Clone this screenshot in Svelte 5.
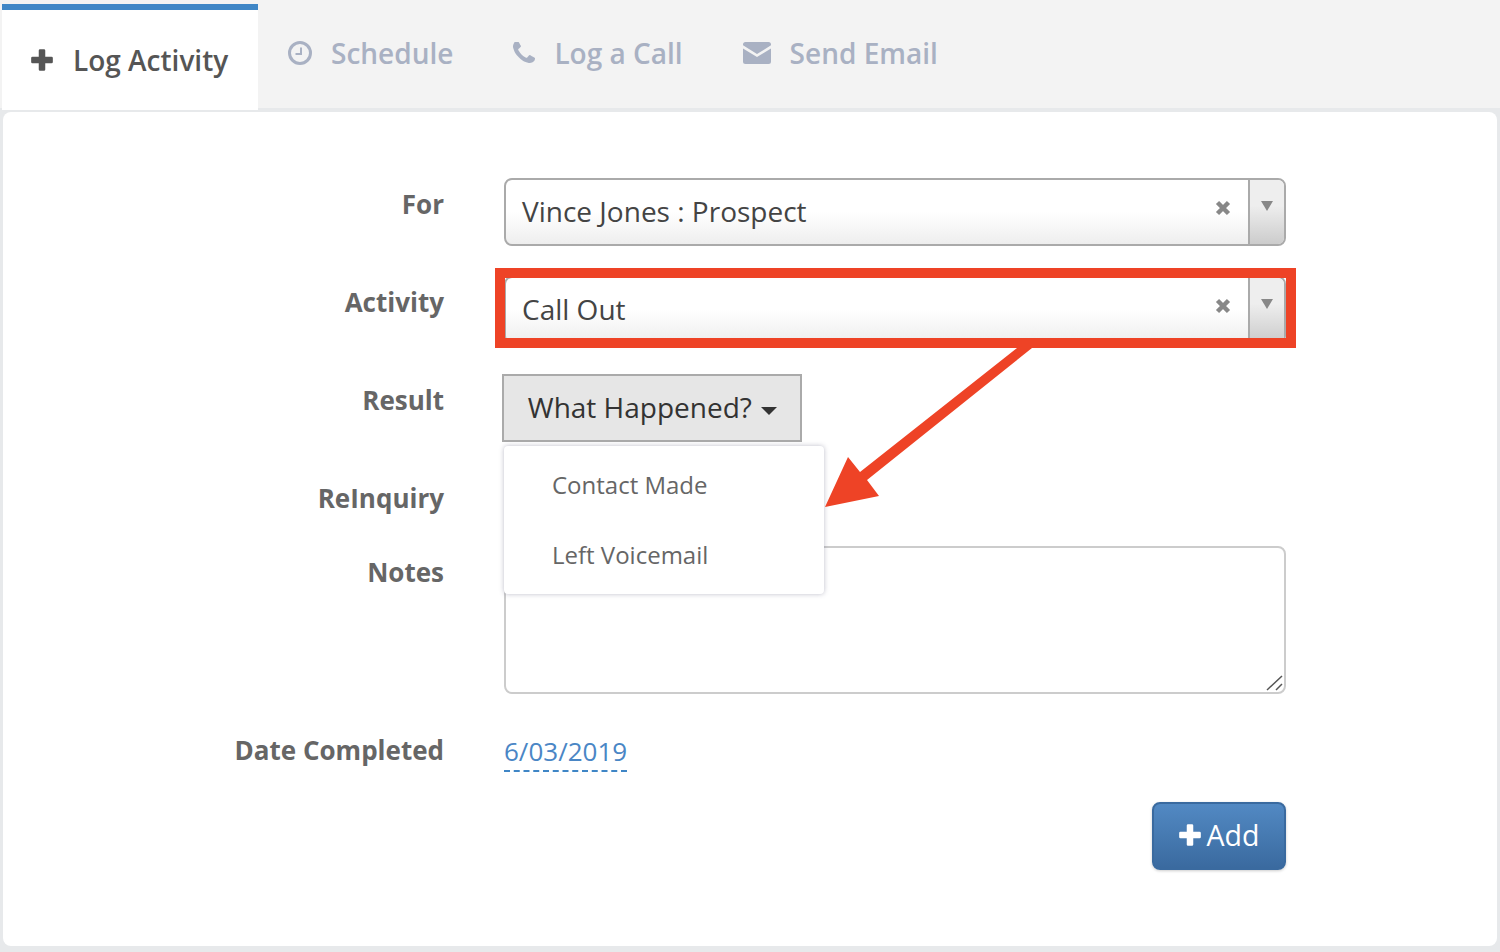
<script lang="ts">
	const tabs = [
		{ label: 'Schedule', icon: 'clock' },
		{ label: 'Log a Call', icon: 'phone' },
		{ label: 'Send Email', icon: 'mail' }
	];
	const selects = [
		{ label: 'For', value: 'Vince Jones : Prospect' },
		{ label: 'Activity', value: 'Call Out' }
	];
</script>

{#snippet plus(size)}
	<svg width={size} height={size} viewBox="0 0 24 24" aria-hidden="true">
		<path d="M9 3.200A1.200 1.200 0 0 1 10.200 2h3.600A1.200 1.200 0 0 1 15 3.200V9h5.800A1.200 1.200 0 0 1 22 10.200v3.600a1.200 1.200 0 0 1-1.200 1.200H15v5.800a1.200 1.200 0 0 1-1.200 1.200h-3.600A1.200 1.200 0 0 1 9 20.800V15H3.200A1.200 1.200 0 0 1 2 13.800v-3.600A1.200 1.200 0 0 1 3.200 9H9z" fill="currentColor" />
	</svg>
{/snippet}

<div class="page">
	<nav class="tabs">
		<div class="tab active">
			{@render plus(26)}
			<span>Log Activity</span>
		</div>
		{#each tabs as tab}
			<div class="tab">
				{#if tab.icon === 'clock'}
					<svg width="24" height="24" viewBox="0 0 24 24" aria-hidden="true">
						<circle cx="12" cy="12" r="10.500" fill="none" stroke="currentColor" stroke-width="3" />
						<path d="M13 6.500V13H7.500" fill="none" stroke="currentColor" stroke-width="2" />
					</svg>
				{:else if tab.icon === 'phone'}
					<svg width="22" height="22" viewBox="192 192 1408 1408" aria-hidden="true">
						<path d="M1600 1240q0 27-10 70.500t-21 68.500q-21 50-122 106-94 51-186 51-27 0-53-3.500t-57.500-12.500-47-14.500-55.500-20.500-49-18q-98-35-175-83-127-79-264-216t-216-264q-48-77-83-175-3-9-18-49t-20.500-55.500-14.500-47-12.500-57.500-3.500-53q0-92 51-186 56-101 106-122 25-11 68.500-21t70.500-10q14 0 21 3 18 6 53 76 11 19 30 54t35 63.500 31 53.500q3 4 17.500 25t21.500 35.500 7 28.500q0 20-28.500 50t-62 55-62 53-28.500 46q0 9 5 22.500t8.500 20.500 14 24 11.500 19q76 137 174 235t235 174q2 1 19 11.500t24 14 20.500 8.500 22.500 5q18 0 46-28.500t53-62 55-62 50-28.500q14 0 28.500 7t35.500 21.500 25 17.500q25 15 53.500 31t63.500 35 54 30q70 35 76 53 3 7 3 21z" fill="currentColor" />
					</svg>
				{:else}
					<svg width="28" height="22" viewBox="0 0 28 22" aria-hidden="true">
						<path d="M2.500 0h23A2.500 2.500 0 0 1 28 2.500v.8L14 12 0 3.300v-.8A2.500 2.500 0 0 1 2.500 0z" fill="currentColor" />
						<path d="M0 6.500 14 15l14-8.500v13A2.500 2.500 0 0 1 25.500 22h-23A2.500 2.500 0 0 1 0 19.500z" fill="currentColor" />
					</svg>
				{/if}
				<span>{tab.label}</span>
			</div>
		{/each}
	</nav>

	<div class="panel-wrap">
		<main class="panel">
			<form class="form" onsubmit={(e) => e.preventDefault()}>
				{#each selects as sel}
					<div class="label">{sel.label}</div>
					<div class="select">
						<span class="select-value">{sel.value}</span>
						<span class="select-clear">
							<svg width="16" height="16" viewBox="0 0 16 16" aria-hidden="true">
								<path d="M2.500 2.500l11 11M13.500 2.500l-11 11" stroke="#888" stroke-width="4.500" />
							</svg>
						</span>
						<span class="select-toggle"><i class="tri"></i></span>
					</div>
				{/each}

				<div class="label">Result</div>
				<div class="result">
					<button type="button" class="dropdown-btn">What Happened? <i class="caret"></i></button>
					<ul class="menu">
						<li>Contact Made</li>
						<li>Left Voicemail</li>
					</ul>
				</div>

				<div class="label">ReInquiry</div>
				<div class="spacer"></div>

				<div class="label">Notes</div>
				<div class="notes-wrap">
					<textarea class="notes"></textarea>
					<svg class="grip" width="20" height="20" viewBox="0 0 20 20" aria-hidden="true">
						<path d="M3 18 18 4M12 18l6-6" stroke="#555" stroke-width="1.500" fill="none" />
					</svg>
				</div>

				<div class="label">Date Completed</div>
				<div class="date-row"><span class="date">6/03/2019</span></div>

				<div class="actions">
					<button type="button" class="add">{@render plus(26)}<span>Add</span></button>
				</div>
			</form>
		</main>
	</div>

	<!-- annotation drawn on top of the screenshot -->
	<div class="highlight"></div>
	<svg class="arrow" width="240" height="180" viewBox="0 0 240 180" aria-hidden="true">
		<path d="M192 3h15L42 135l12 16L0 162 23 112l12 15z" fill="#ee4326" />
	</svg>
</div>

<style>
	:global(body) {
		background: #f3f3f3;
	}

	.page {
		position: relative;
		height: 952px;
		overflow: hidden;
		font-family: 'Open Sans', sans-serif;
	}

	.tabs {
		display: flex;
		align-items: flex-start;
		height: 108px;
		padding-left: 2px;
	}

	.tab {
		display: flex;
		align-items: center;
		gap: 19px;
		height: 108px;
		padding: 0 30px 2px;
		box-sizing: border-box;
		font-size: 28px;
		font-weight: 600;
		color: #a9b1c3;
	}

	.tab.active {
		position: relative;
		width: 256px;
		height: 106px;
		margin-top: 4px;
		padding: 0 0 0 27px;
		gap: 18px;
		background: #fff;
		border-top: 6px solid #3f86c6;
		color: #555;
	}

	.panel-wrap {
		padding: 4px 3px 6px;
		background: #e7e9eb;
	}

	.panel {
		height: 834px;
		padding-top: 66px;
		box-sizing: border-box;
		background: #fff;
		border-radius: 8px;
	}

	.form {
		display: grid;
		grid-template-columns: 441px 782px;
		column-gap: 60px;
		row-gap: 30px;
	}

	.label {
		padding-top: 8px;
		line-height: 36px;
		text-align: right;
		font-size: 26px;
		font-weight: 700;
		color: #666;
	}

	.select {
		display: flex;
		align-items: stretch;
		height: 68px;
		box-sizing: border-box;
		border: 2px solid #aaa;
		border-radius: 8px;
		background: linear-gradient(#fff 50%, #eee);
		color: #444;
	}

	.select-value {
		flex: 1;
		padding-left: 16px;
		line-height: 62px;
		font-size: 28px;
	}

	.select-clear {
		width: 50px;
		padding: 19px 0 0 17px;
		box-sizing: border-box;
	}

	.select-toggle {
		display: flex;
		justify-content: center;
		width: 36px;
		padding-top: 21px;
		box-sizing: border-box;
		border-left: 2px solid #aaa;
		border-radius: 0 6px 6px 0;
		background: linear-gradient(#eee 40%, #ccc);
	}

	.tri {
		width: 0;
		height: 0;
		border-left: 6px solid transparent;
		border-right: 6px solid transparent;
		border-top: 10px solid #888;
	}

	.result {
		position: relative;
		height: 68px;
	}

	.dropdown-btn {
		display: block;
		width: 300px;
		height: 68px;
		margin-left: -2px;
		padding: 0 0 2px 1px;
		box-sizing: border-box;
		background: #e6e6e6;
		border: 2px solid #aaa;
		font-family: inherit;
		font-size: 28px;
		color: #333;
	}

	.caret {
		display: inline-block;
		width: 0;
		height: 0;
		margin-left: 2px;
		vertical-align: middle;
		border-left: 8px solid transparent;
		border-right: 8px solid transparent;
		border-top: 8px solid #333;
	}

	.menu {
		position: absolute;
		left: 0;
		top: 72px;
		z-index: 2;
		width: 320px;
		height: 148px;
		margin: 0;
		padding: 4px 0;
		box-sizing: border-box;
		list-style: none;
		background: #fff;
		border-radius: 4px;
		box-shadow: 0 0 5px rgba(90, 90, 120, 0.4);
	}

	.menu li {
		height: 70px;
		line-height: 70px;
		padding-left: 48px;
		font-size: 24px;
		color: #666;
	}

	.spacer {
		height: 44px;
	}

	.notes-wrap {
		position: relative;
		height: 148px;
	}

	.notes {
		display: block;
		width: 782px;
		height: 148px;
		box-sizing: border-box;
		border: 2px solid #ccc;
		border-radius: 8px;
		background: #fff;
		outline: none;
		resize: none;
	}

	.grip {
		position: absolute;
		right: 2px;
		bottom: 2px;
	}

	.date-row {
		height: 48px;
		padding-top: 9px;
		box-sizing: border-box;
	}

	.date {
		display: inline-block;
		height: 39px;
		line-height: 37px;
		box-sizing: border-box;
		border-bottom: 2px dashed #3f86c6;
		font-size: 26px;
		color: #4a86c5;
	}

	.actions {
		grid-column: 2;
		display: flex;
		justify-content: flex-end;
	}

	.add {
		display: flex;
		align-items: center;
		justify-content: center;
		gap: 4px;
		width: 134px;
		height: 68px;
		padding: 0 2px 2px 0;
		box-sizing: border-box;
		border: 2px solid #3a6a9f;
		border-radius: 8px;
		background: linear-gradient(#5289c3, #3a6a9f);
		box-shadow: 0 1px 3px rgba(0, 0, 0, 0.2);
		font-family: inherit;
		font-size: 28.500px;
		color: #fff;
	}

	.highlight {
		position: absolute;
		left: 495px;
		top: 268px;
		z-index: 3;
		width: 801px;
		height: 80px;
		box-sizing: border-box;
		border: 10px solid #ee4326;
	}

	.arrow {
		position: absolute;
		left: 825px;
		top: 345px;
		z-index: 3;
	}
</style>
